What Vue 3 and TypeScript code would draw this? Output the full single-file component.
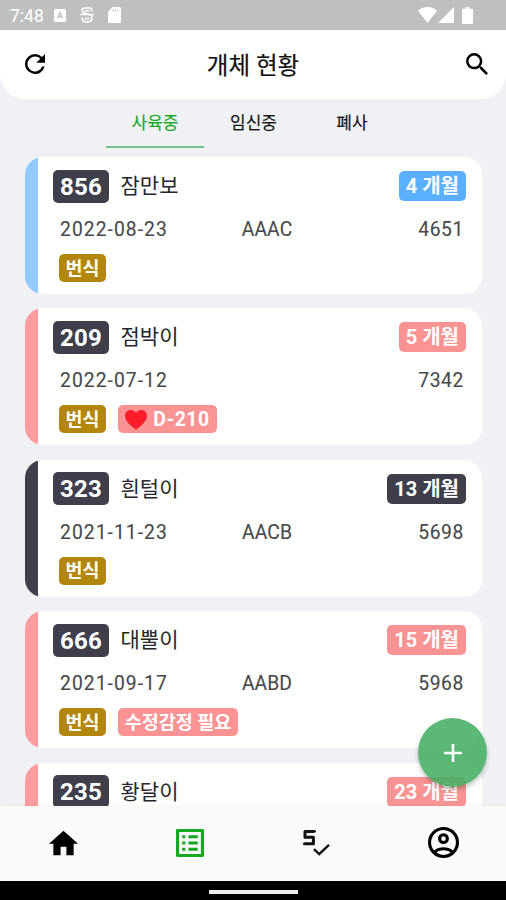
<script setup lang="ts">
interface Animal {
  id: string
  name: string
  months: number
  tone: 'blue' | 'pink' | 'dark'
  birth?: string
  code?: string
  tag?: string
  due?: string
  notice?: string
}

const tabs: string[] = ['사육중', '임신중', '폐사']

const animals: Animal[] = [
  { id: '856', name: '잠만보', months: 4, birth: '2022-08-23', code: 'AAAC', tag: '4651', tone: 'blue' },
  { id: '209', name: '점박이', months: 5, birth: '2022-07-12', code: '', tag: '7342', tone: 'pink', due: 'D-210' },
  { id: '323', name: '흰털이', months: 13, birth: '2021-11-23', code: 'AACB', tag: '5698', tone: 'dark' },
  { id: '666', name: '대뿔이', months: 15, birth: '2021-09-17', code: 'AABD', tag: '5968', tone: 'pink', notice: '수정감정 필요' },
  { id: '235', name: '황달이', months: 23, tone: 'pink' },
]
</script>

<template>
  <div class="screen">
    <div class="status">
      <span class="clock">7:48</span>
      <svg class="s-app" viewBox="0 0 12 13"><rect width="12" height="13" rx="1.5" fill="#fff" /><path d="M3.5 9.5 6 3.5l2.5 6M4.4 7.5h3.2" fill="none" stroke="#bfbfbf" stroke-width="1.2" /></svg>
      <svg class="s-loop" viewBox="0 0 14 16"><path d="M11.800 4.200V3Q11.800 1 9.500 1H4.500Q2 1 2 3.300T4.500 6L9.500 7.500Q12 8.300 12 10.500C12 13.500 10 15 7 15S2 13.500 2 10.500M.3 7.600H13.700M4.500 3.700H9.500M4.800 11q2.200 2 4.400 0" fill="none" stroke="#fff" stroke-width="1.500" /></svg>
      <svg class="s-card" viewBox="0 0 13 16"><path d="M4.500 0H11.500Q13 0 13 1.500V14.500Q13 16 11.500 16H1.500Q0 16 0 14.500V5Z" fill="#fff" /><path d="M5.200 2v2.500M7.500 2v2.500M9.800 2v2.500" stroke="#c6c6c6" stroke-width="1" /></svg>
      <span class="grow"></span>
      <svg class="s-wifi" viewBox="0 0 19 16"><path d="M0 3.700C5-1.200 14-1.200 19 3.700L9.500 16Z" fill="#fff" /></svg>
      <svg class="s-signal" viewBox="0 0 16 16"><path d="M16 0V16H0Z" fill="#fff" /></svg>
      <svg class="s-battery" viewBox="0 0 11 17"><path d="M3.500 0h4v1.800H10q1 0 1 1V16q0 1-1 1H1q-1 0-1-1V2.800q0-1 1-1h2.500Z" fill="#fff" /></svg>
    </div>

    <header class="header">
      <svg class="refresh" viewBox="4 4 16 16"><path d="M17.650 6.350A7.960 7.960 0 0 0 12 4a8 8 0 1 0 7.730 10h-2.080A6 6 0 1 1 12 6c1.660 0 3.140.69 4.220 1.780L13 11h7V4z" /></svg>
      <h1>개체 현황</h1>
      <svg class="search" viewBox="3 3 17.490 17.490"><path d="M15.500 14h-.79l-.28-.27A6.470 6.470 0 0 0 16 9.500 6.500 6.500 0 1 0 9.500 16c1.610 0 3.090-.59 4.230-1.570l.27.28v.79l5 4.990L20.490 19zm-6 0a4.500 4.500 0 1 1 0-9 4.500 4.500 0 0 1 0 9z" /></svg>
    </header>

    <nav class="tabs">
      <div v-for="(tab, i) in tabs" :key="tab" class="tab" :class="{ active: i === 0 }">{{ tab }}</div>
    </nav>

    <main class="list">
      <article v-for="a in animals" :key="a.id" class="card" :class="a.tone">
        <div class="top">
          <span class="id">{{ a.id }}</span>
          <span class="name">{{ a.name }}</span>
          <span class="grow"></span>
          <span class="chip age">{{ a.months }} 개월</span>
        </div>
        <div v-if="a.birth" class="info">
          <span class="birth">{{ a.birth }}</span>
          <span class="code">{{ a.code }}</span>
          <span class="tag">{{ a.tag }}</span>
        </div>
        <div v-if="a.birth" class="labels">
          <span class="chip breed">번식</span>
          <span v-if="a.due" class="chip due">
            <svg viewBox="0 0 22 20"><path d="M11 20C7 16.500 0 11.500 0 6 0 2.500 2.500 0 5.700 0 8 0 10 1.200 11 3.200 12 1.200 14 0 16.300 0 19.500 0 22 2.500 22 6c0 5.500-7 10.500-11 14Z" fill="#fb1c2c" /></svg>
            {{ a.due }}
          </span>
          <span v-if="a.notice" class="chip notice">{{ a.notice }}</span>
        </div>
      </article>
    </main>

    <button class="fab" aria-label="추가">
      <svg viewBox="0 0 18 18"><path d="M9 0v18M0 9h18" stroke="#fff" stroke-width="2.600" /></svg>
    </button>

    <nav class="bottom">
      <div><svg class="home" viewBox="2 3 20 17"><path d="M10 20v-6h4v6h5v-8h3L12 3 2 12h3v8z" /></svg></div>
      <div><svg class="board" viewBox="3 3 18 18"><path fill="#12a820" d="M19 5v14H5V5h14m1.100-2H3.900c-.5 0-.9.400-.9.900v16.200c0 .4.400.9.900.9h16.200c.4 0 .9-.5.900-.9V3.900c0-.5-.5-.9-.9-.9zM11 7h6v2h-6V7zm0 4h6v2h-6v-2zm0 4h6v2h-6v-2zM7 7h2v2H7V7zm0 4h2v2H7v-2zm0 4h2v2H7v-2z" /></svg></div>
      <div><svg class="check" viewBox="0 0 27 27"><path d="M11.500 3.200V2.500H2V8.300H10.400V14.700H1.500V13.800" fill="none" stroke="#111" stroke-width="3" stroke-linejoin="round" /><path d="m11 20.200 5.200 5L26 15.800" fill="none" stroke="#111" stroke-width="2.400" /></svg></div>
      <div><svg class="user" viewBox="2 2 20 20"><path d="M12 2a10 10 0 1 0 0 20 10 10 0 0 0 0-20zM7.350 18.500C8.660 17.560 10.260 17 12 17s3.340.56 4.650 1.500a7.960 7.960 0 0 1-9.300 0zm10.790-1.380a9.950 9.950 0 0 0-12.280 0A8 8 0 1 1 20 12c0 1.950-.7 3.730-1.860 5.120zM12 6a3.500 3.500 0 1 0 0 7 3.500 3.500 0 0 0 0-7zm0 5a1.500 1.500 0 1 1 0-3 1.500 1.500 0 0 1 0 3z" /></svg></div>
    </nav>
    <div class="system"><span></span></div>
  </div>
</template>

<style>
body {
  margin: 0;
  overflow: hidden;
}
</style>

<style scoped>
.screen {
  position: relative;
  display: flex;
  flex-direction: column;
  width: 506px;
  height: 900px;
  overflow: hidden;
  background: #eff1f5;
  color: #111;
  font-family: Roboto, 'Noto Sans CJK KR', sans-serif;
  white-space: nowrap;
}
svg {
  display: block;
  flex: none;
}
.grow {
  flex: 1;
}
.status {
  flex: none;
  display: flex;
  align-items: center;
  height: 30px;
  padding: 0 33px 0 10px;
  box-sizing: border-box;
  background: #bfbfbf;
  color: #fff;
}
.clock {
  width: 44px;
  font-size: 17.500px;
  line-height: 30px;
  padding-top: 2px;
}
.s-app { width: 12px; height: 13px; }
.s-loop { width: 14px; height: 16px; margin-left: 14px; }
.s-card { width: 13px; height: 16px; margin-left: 14px; }
.s-wifi { width: 19px; height: 16px; }
.s-signal { width: 16px; height: 16px; margin-left: 1px; }
.s-battery { width: 11px; height: 17px; margin-left: 8px; }
.header {
  flex: none;
  display: flex;
  align-items: center;
  justify-content: space-between;
  height: 69px;
  padding: 0 18px 0 25px;
  box-sizing: border-box;
  background: #fff;
  border-radius: 0 0 25px 25px;
}
h1 {
  margin: 2px 5px 0 0;
  font-size: 23.500px;
  font-weight: 400;
  -webkit-text-stroke: 0.200px #111;
  line-height: 34px;
}
.refresh { width: 20px; height: 20px; margin-bottom: 1px; }
.search { width: 22px; height: 22px; margin-bottom: 1px; }
.tabs {
  flex: none;
  display: flex;
  justify-content: center;
  height: 49px;
  padding-left: 1px;
}
.tab {
  width: 98.500px;
  box-sizing: border-box;
  text-align: center;
  font-size: 17px;
  font-weight: 400;
  -webkit-text-stroke: 0.150px currentColor;
  line-height: 48px;
}
.active {
  color: #12a820;
  border-bottom: 2px solid #6cc489;
}
.list {
  flex: 1;
  min-height: 0;
  overflow: hidden;
  padding: 9px 24px 0 25px;
}
.card {
  height: 137px;
  margin-bottom: 14.400px;
  padding: 12px 16px 0 28px;
  box-sizing: border-box;
  border-radius: 18px;
}
.blue { background: linear-gradient(90deg, #91cbff 13px, #fff 13px); }
.pink { background: linear-gradient(90deg, #ff9c9f 13px, #fff 13px); }
.dark { background: linear-gradient(90deg, #3e3f4a 13px, #fff 13px); }
.top {
  display: flex;
  align-items: center;
  height: 34px;
}
.id {
  width: 56px;
  height: 33px;
  border-radius: 5px;
  background: #3e3f4a;
  color: #fff;
  font-size: 24px;
  font-weight: 700;
  line-height: 34px;
  text-align: center;
  letter-spacing: 0.300px;
}
.name {
  margin-left: 11.500px;
  color: #26262c;
  font-size: 21px;
  line-height: 32px;
}
.chip {
  display: flex;
  align-items: center;
  justify-content: center;
  box-sizing: border-box;
  height: 28px;
  border-radius: 5px;
  background: #fa9494;
  color: #fff;
  font-size: 18.500px;
  font-weight: 700;
  line-height: 28px;
}
.age {
  height: 30px;
  padding: 1px 7px 0;
  font-size: 20px;
  line-height: 29px;
}
.blue .age { background: #5aafff; }
.dark .age { background: #3e3f4a; }
.info {
  display: grid;
  grid-template-columns: 140px 1fr 1fr;
  margin: 15px 2px 0 7px;
  color: #48484b;
  font-size: 19.300px;
  line-height: 24px;
  letter-spacing: 0.600px;
  -webkit-text-stroke: 0.120px #48484b;
}
.birth { letter-spacing: 1.050px; }
.code { width: 134px; text-align: center; letter-spacing: 0.100px; }
.tag { text-align: right; }
.labels {
  display: flex;
  gap: 12px;
  margin: 12px 0 0 6px;
}
.breed {
  width: 47px;
  padding-top: 1px;
  background: #b3860e;
}
.due {
  width: 99px;
  padding-top: 1px;
  gap: 6px;
  font-size: 19.500px;
  letter-spacing: 0.500px;
}
.due svg { width: 22px; height: 20px; }
.notice { width: 120px; padding-top: 1px; }
.fab {
  position: absolute;
  top: 718px;
  right: 19px;
  display: flex;
  align-items: center;
  justify-content: center;
  width: 69px;
  height: 69px;
  padding: 0;
  border: 0;
  border-radius: 50%;
  background: rgba(64, 172, 96, 0.86);
  box-shadow: 0 3px 5px rgba(0, 0, 0, 0.24);
}
.fab svg { width: 18px; height: 18px; }
.bottom {
  flex: none;
  display: grid;
  grid-template-columns: repeat(4, 1fr);
  height: 75px;
  background: #fafafa;
  box-shadow: 0 -1px 2px rgba(0, 0, 0, 0.04);
}
.bottom div {
  display: flex;
  align-items: center;
  justify-content: center;
  padding: 0 0 2px 1px;
}
.home { width: 29px; height: 26px; }
.board { width: 28px; height: 28px; }
.check { width: 27px; height: 27px; }
.user { width: 31px; height: 31px; }
.system {
  flex: none;
  display: flex;
  align-items: center;
  justify-content: center;
  height: 19px;
  background: #000;
}
.system span {
  width: 89px;
  height: 4px;
  margin-top: 2px;
  background: #eee;
}
</style>
